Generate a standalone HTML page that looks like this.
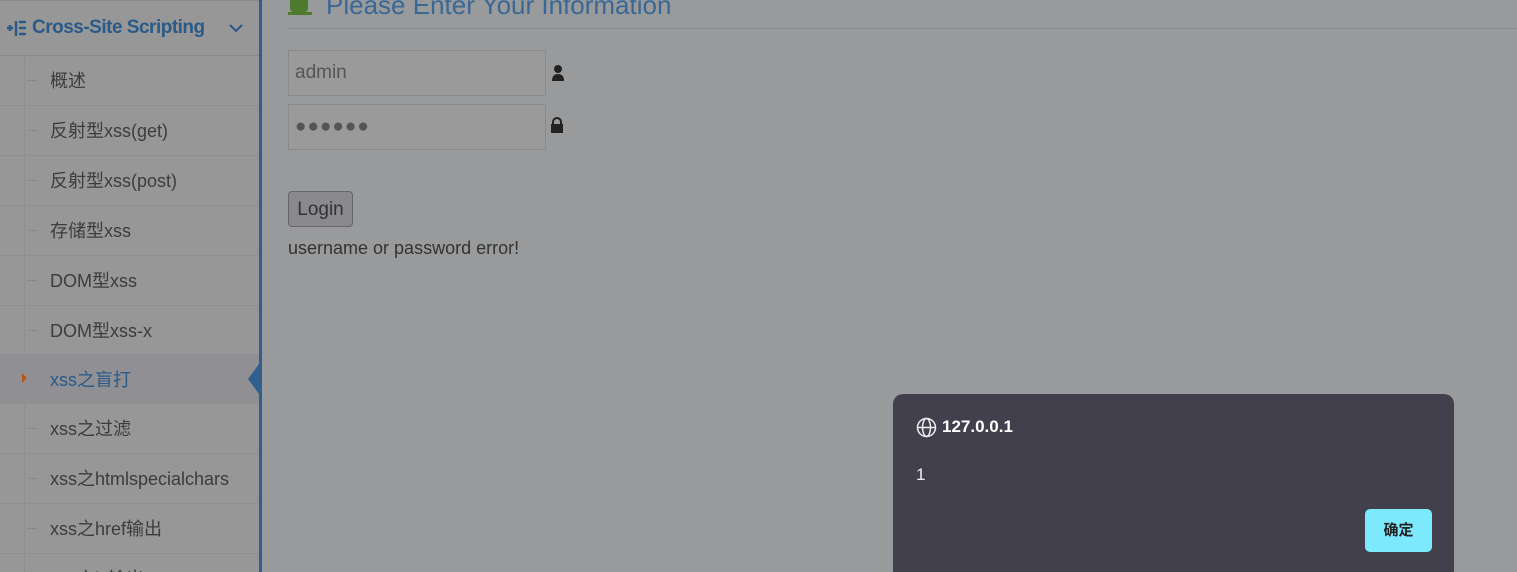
<!DOCTYPE html>
<html style="height:572px;overflow:hidden"><head><meta charset="utf-8"><style>
body{margin:0;width:1517px;height:572px;overflow:hidden;background:#999a9b;font-family:"Liberation Sans","Noto Sans CJK SC",sans-serif;position:relative}
.side{position:absolute;left:0;top:0;width:259px;height:572px;background:#979798;border-right:3px solid #2f5f8c;overflow:hidden}
.hdr{position:absolute;left:0;top:0;width:259px;height:54px;border-bottom:1px solid #8a8a8a;border-top:1px solid #8a8a8a}
.hdr .t{position:absolute;left:32px;top:16px;color:#2a5a88;font-size:19px;font-weight:bold;letter-spacing:-0.5px}
.vline{position:absolute;left:24px;top:56px;height:516px;border-left:1px dotted #888}
.item{position:absolute;left:0;width:259px;height:49px;border-bottom:1px solid #8f8f8f;color:#3c3c3c;font-size:18px}
.item span{position:absolute;left:50px;top:11px}
.item i{position:absolute;left:28px;top:24px;width:9px;border-top:1px dotted #777}
.act{background:#8f8f94}
.act span{color:#2a5a88}
.title{position:absolute;left:326px;top:-10px;font-size:26px;color:#3a6896}
.hr{position:absolute;left:288px;top:28px;width:1229px;border-top:1px solid #8b8b8b}
.inp{position:absolute;left:288px;width:256px;height:44px;border:1px solid #8a8a8a;background:#9a9a9a;font-size:19px;color:#555}
.btn{position:absolute;left:288px;top:191px;width:63px;height:34px;border:1px solid #666;border-radius:4px;background:#8a8a8e;font-size:19px;color:#333;text-align:center;line-height:36px}
.err{position:absolute;left:288px;top:238px;font-size:18px;color:#333}
.dlg{position:absolute;left:893px;top:394px;width:561px;height:178px;background:#42404d;border-radius:10px 10px 0 0;color:#eee}
.ok{position:absolute;left:472px;top:115px;width:67px;height:43px;background:#7de9fc;border-radius:5px;color:#222;font-weight:bold;font-size:15px;text-align:center;line-height:43px}
</style></head><body>
<div class="side">
<div class="hdr"><svg style="position:absolute;left:6px;top:18px" width="22" height="18"><path d="M1 9h6M4 6v6M10 2v15M13 3h7M13 9h7M13 15h7" stroke="#2a5a88" stroke-width="2.5" fill="none"/></svg><div class="t">Cross-Site Scripting</div><svg style="position:absolute;left:228px;top:22px" width="16" height="10"><path d="M2 2l6 6 6-6" stroke="#2a5a88" stroke-width="2" fill="none"/></svg></div>
<div class="vline"></div>
<div class="item" style="top:56px"><i></i><span>概述</span></div>
<div class="item" style="top:106px"><i></i><span>反射型xss(get)</span></div>
<div class="item" style="top:156px"><i></i><span>反射型xss(post)</span></div>
<div class="item" style="top:206px"><i></i><span>存储型xss</span></div>
<div class="item" style="top:256px"><i></i><span>DOM型xss</span></div>
<div class="item" style="top:306px"><i></i><span>DOM型xss-x</span></div>
<div class="item act" style="top:354px"><b style="position:absolute;left:22px;top:19px;border-left:5px solid #b5541d;border-top:5px solid transparent;border-bottom:5px solid transparent"></b><span style="top:12px">xss之盲打</span><b style="position:absolute;right:0;top:10px;border-right:11px solid #2f5f8c;border-top:15px solid transparent;border-bottom:15px solid transparent"></b></div>
<div class="item" style="top:404px"><i></i><span>xss之过滤</span></div>
<div class="item" style="top:454px"><i></i><span>xss之htmlspecialchars</span></div>
<div class="item" style="top:504px"><i></i><span>xss之href输出</span></div>
<div class="item" style="top:554px;height:18px;border:0"><i></i><span>xss之js输出</span></div>
</div>
<svg style="position:absolute;left:288px;top:0" width="30" height="16"><path d="M2 0h18v8q0 4-4 4h-10q-4 0-4-4z" fill="#4f7a2d"/><rect x="0" y="12" width="24" height="3" fill="#4f7a2d"/></svg>
<div class="title">Please Enter Your Information</div>
<div class="hr"></div>
<div class="inp" style="top:50px"><span style="position:absolute;left:6px;top:11px">admin</span></div>
<svg style="position:absolute;left:551px;top:64px" width="16" height="18"><circle cx="7" cy="5" r="4" fill="#222"/><path d="M1 17q0-7 6-7t6 7z" fill="#222"/></svg>
<div class="inp" style="top:104px"><span style="position:absolute;left:6px;top:11px;letter-spacing:1px">●●●●●●</span></div>
<svg style="position:absolute;left:550px;top:117px" width="14" height="17"><path d="M3 7V5a4 4 0 0 1 8 0v2" stroke="#222" stroke-width="2" fill="none"/><rect x="1" y="7" width="12" height="9" fill="#222"/></svg>
<div class="btn">Login</div>
<div class="err">username or password error!</div>
<div class="dlg">
<svg style="position:absolute;left:23px;top:23px" width="21" height="21" fill="none" stroke="#eee" stroke-width="1.5"><circle cx="10.5" cy="10.5" r="9"/><ellipse cx="10.5" cy="10.5" rx="4" ry="9"/><path d="M1.5 10.5h18"/></svg>
<div style="position:absolute;left:49px;top:23px;font-weight:bold;font-size:17px;color:#fff">127.0.0.1</div>
<div style="position:absolute;left:23px;top:71px;font-size:17px">1</div>
<div class="ok">确定</div>
</div>
</body></html>
